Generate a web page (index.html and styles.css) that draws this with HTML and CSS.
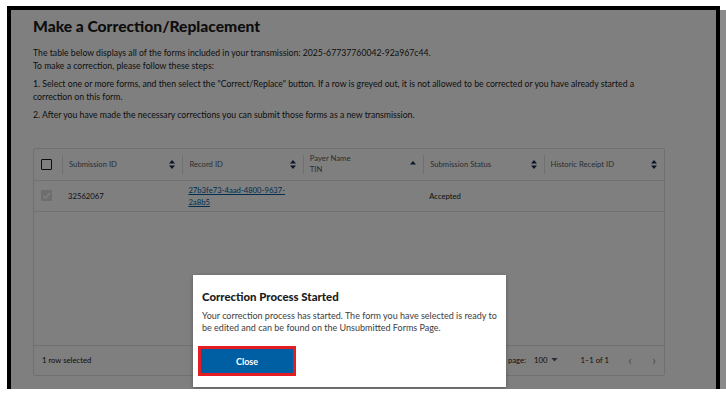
FILE: index.html
```html
<!DOCTYPE html>
<html>
<head>
    <title>Make a Correction/Replacement</title>
    <link rel="stylesheet" href="styles.css">
</head>
<body>
    <div class="desk">
        <div class="screen">
            <div class="page">
                <h1>Make a Correction/Replacement</h1>
                <p>The table below displays all of the forms included in your transmission: 2025-67737760042-92a967c44.<br>To make a correction, please follow these steps:</p>
                <p>1. Select one or more forms, and then select the "Correct/Replace" button. If a row is greyed out, it is not allowed to be corrected or you have already started a correction on this form.</p>
                <p>2. After you have made the necessary corrections you can submit those forms as a new transmission.</p>

                <div class="table">
                    <div class="thead">
                        <div class="th check-cell"><span class="box"></span></div>
                        <div class="th"><span>Submission ID</span><svg class="sort" viewBox="0 0 6 9"><path d="M3 0 6 3.5H0zM3 9 0 5.5h6z"/></svg></div>
                        <div class="th"><span>Record ID</span><svg class="sort" viewBox="0 0 6 9"><path d="M3 0 6 3.5H0zM3 9 0 5.5h6z"/></svg></div>
                        <div class="th"><span>Payer Name<br>TIN</span><svg class="sort" viewBox="0 0 6 9"><path d="M3 1 6 4.5H0z"/></svg></div>
                        <div class="th"><span>Submission Status</span><svg class="sort" viewBox="0 0 6 9"><path d="M3 0 6 3.5H0zM3 9 0 5.5h6z"/></svg></div>
                        <div class="th"><span>Historic Receipt ID</span><svg class="sort" viewBox="0 0 6 9"><path d="M3 0 6 3.5H0zM3 9 0 5.5h6z"/></svg></div>
                    </div>
                    <div class="row">
                        <div class="td check-cell"><span class="box checked"><svg viewBox="0 0 10 10"><path d="M2 5.2 4.2 7.3 8.2 2.8"/></svg></span></div>
                        <div class="td">32562067</div>
                        <div class="td"><a href="#">27b3fe73-4aad-4800-9637-<br>2a8b5</a></div>
                        <div class="td"></div>
                        <div class="td">Accepted</div>
                        <div class="td"></div>
                    </div>
                    <div class="empty"></div>
                    <div class="tfoot">
                        <span>1 row selected</span>
                        <div class="pager">
                            <span>Rows per page:</span>
                            <span class="per">100 <svg viewBox="0 0 8 5"><path d="M0 0h8L4 4.5z"/></svg></span>
                            <span class="range">1–1 of 1</span>
                            <span class="arrow">&lsaquo;</span>
                            <span class="arrow">&rsaquo;</span>
                        </div>
                    </div>
                </div>
            </div>
            <div class="overlay"></div>
            <div class="modal">
                <h2>Correction Process Started</h2>
                <p>Your correction process has started. The form you have selected is ready to be edited and can be found on the Unsubmitted Forms Page.</p>
                <button class="btn">Close</button>
            </div>
        </div>
        <div class="edge"></div>
    </div>
</body>
</html>
```

FILE: styles.css
```css
body {
    margin: 0;
    background: #fff;
    font-family: Lato, "Liberation Sans", sans-serif;
    color: #1b1b1b;
}

.desk {
    display: flex;
    padding: 6px 0 0 7px;
}

.screen {
    position: relative;
    width: 713px;
    height: 383px;
    box-sizing: border-box;
    border: 4px solid #000;
    border-bottom: none;
    overflow: hidden;
}

.edge {
    width: 6px;
    margin-top: 4px;
    height: 379px;
    background: #8a8a8a;
}

.page {
    height: 100%;
    background: #fff;
    padding: 6px 0 0 22px;
    box-sizing: border-box;
}

h1 {
    margin: 0 0 11px 0;
    font-size: 15.6px;
    line-height: 20px;
    font-weight: 900;
}

.page p {
    margin: 0 0 6px 0;
    font-size: 8.7px;
    line-height: 12.5px;
    max-width: 625px;
}

.table {
    margin-top: 26px;
    width: 632px;
    border: 1px solid #dfe1e2;
    border-radius: 2px;
    box-sizing: border-box;
    font-size: 7.7px;
}

.thead, .row {
    display: grid;
    grid-template-columns: 28px repeat(5, 1fr);
    border-bottom: 1px solid #dfe1e2;
}

.thead {
    padding: 6px 0;
}

.th {
    height: 19px;
    display: flex;
    align-items: center;
    justify-content: space-between;
    padding: 0 7px 0 6px;
    border-left: 1px solid #dfe1e2;
    color: #565c65;
    line-height: 11px;
}

.th.check-cell, .td.check-cell {
    border-left: none;
    padding: 0 0 0 7px;
    justify-content: flex-start;
}

.sort {
    width: 6px;
    height: 9px;
    fill: #162e51;
}

.box {
    width: 11px;
    height: 11px;
    box-sizing: border-box;
    border: 1.5px solid #1b1b1b;
    background: #fff;
    border-radius: 1px;
    display: flex;
}

.box.checked {
    border: none;
    background: #dcdcdc;
}

.box.checked svg {
    width: 11px;
    height: 11px;
    fill: none;
    stroke: #fff;
    stroke-width: 1.4;
}

.row {
    height: 30px;
}

.td {
    display: flex;
    align-items: center;
    padding: 0 6px;
    line-height: 12px;
}

.td a {
    color: #005ea2;
}

.empty {
    height: 133px;
    border-bottom: 1px solid #dfe1e2;
}

.tfoot {
    height: 29px;
    display: flex;
    align-items: center;
    justify-content: space-between;
    padding: 0 0 0 8px;
}

.pager {
    display: flex;
    align-items: center;
}

.per {
    margin-left: 8px;
    display: flex;
    align-items: center;
    gap: 4px;
}

.per svg {
    width: 7px;
    height: 4px;
    fill: #565c65;
}

.range {
    margin: 0 11px 0 22px;
}

.arrow {
    font-size: 13px;
    color: #a0a0a0;
    width: 20px;
    text-align: center;
}

.arrow + .arrow {
    margin-left: 4px;
}

.overlay {
    position: absolute;
    inset: 0;
    background: rgba(0, 0, 0, 0.5);
}

.modal {
    position: absolute;
    left: 182px;
    top: 265px;
    width: 313px;
    height: 112px;
    box-sizing: border-box;
    background: #fff;
    padding: 15px 6px 0 9px;
    box-shadow: 0 1px 4px rgba(0, 0, 0, 0.3);
}

.modal h2 {
    margin: 0 0 6px 0;
    font-size: 11.4px;
    line-height: 14px;
    font-weight: 900;
}

.modal p {
    margin: 0 0 15px 0;
    font-size: 9px;
    line-height: 12px;
    color: #3d3d3d;
}

.btn {
    display: block;
    margin-left: -1px;
    width: 92px;
    height: 24px;
    background: #005ea2;
    color: #fff;
    border: none;
    font-family: inherit;
    font-size: 9px;
    font-weight: bold;
    outline: 3px solid #e41d24;
    outline-offset: 0;
}
```
